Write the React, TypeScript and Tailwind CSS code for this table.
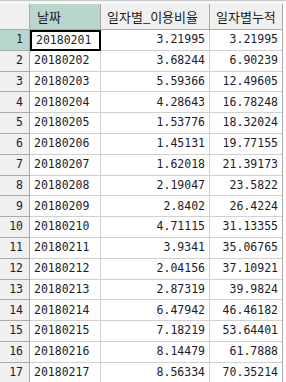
import React from "react";

type Row = {
	date: string;
	rate: string;
	total: string;
};

const rows: Row[] = [
	{ date: "20180201", rate: "3.21995", total: "3.21995" },
	{ date: "20180202", rate: "3.68244", total: "6.90239" },
	{ date: "20180203", rate: "5.59366", total: "12.49605" },
	{ date: "20180204", rate: "4.28643", total: "16.78248" },
	{ date: "20180205", rate: "1.53776", total: "18.32024" },
	{ date: "20180206", rate: "1.45131", total: "19.77155" },
	{ date: "20180207", rate: "1.62018", total: "21.39173" },
	{ date: "20180208", rate: "2.19047", total: "23.5822" },
	{ date: "20180209", rate: "2.8402", total: "26.4224" },
	{ date: "20180210", rate: "4.71115", total: "31.13355" },
	{ date: "20180211", rate: "3.9341", total: "35.06765" },
	{ date: "20180212", rate: "2.04156", total: "37.10921" },
	{ date: "20180213", rate: "2.87319", total: "39.9824" },
	{ date: "20180214", rate: "6.47942", total: "46.46182" },
	{ date: "20180215", rate: "7.18219", total: "53.64401" },
	{ date: "20180216", rate: "8.14479", total: "61.7888" },
	{ date: "20180217", rate: "8.56334", total: "70.35214" },
];

const mono = "font-['DejaVu_Sans_Mono','Liberation_Mono',monospace] text-[11.5px] text-[#1b1b2a]";
const kr = "font-['Noto_Sans_CJK_KR','Noto_Sans',sans-serif] text-[13px] text-[#1a1a1a]";

export default function App() {
	return (
		<div className="w-[286px] h-[382px] overflow-hidden bg-white">
			<div className="h-[4px] border-t border-[#c8c8c8] bg-[#f7f7f7]"></div>
			<div className="flex flex-col w-[283px] border-r border-[#a9a9a9]">
				<div className="flex h-[26px] border-b border-[#a9a9a9]">
					<div className="w-[30px] bg-[#f0f0f0] border-r border-[#a9a9a9]"></div>
					<div className={"w-[71px] bg-[#b9d6cd] border-r border-[#a9a9a9] flex items-center pl-[7px] " + kr}>날짜</div>
					<div className={"w-[109px] bg-[#f0f0f0] border-r border-[#a9a9a9] flex items-center pl-[6px] " + kr}>일자별_이용비율</div>
					<div className={"flex-1 bg-[#f0f0f0] flex items-center pl-[6px] " + kr}>일자별누적</div>
				</div>
				{rows.map((r, i) => (
					<div key={r.date} className="flex h-[20.8px] shrink-0">
						<div className={"w-[30px] flex items-center justify-end pr-[6px] border-r border-b border-[#a9a9a9] " + (i === 0 ? "bg-[#b9d6cd] " : "bg-[#f0f0f0] ") + mono}>
							{i + 1}
						</div>
						<div className={"w-[71px] flex items-center pl-[4px] " + (i === 0 ? "border-2 border-black " : "border-r border-b border-[#d0d0d0] ") + mono}>
							{r.date}
						</div>
						<div className={"w-[109px] flex items-center justify-end pr-[4px] border-r border-b border-[#d0d0d0] " + mono}>
							{r.rate}
						</div>
						<div className={"flex-1 flex items-center justify-end pr-[4px] border-b border-[#d0d0d0] " + mono}>
							{r.total}
						</div>
					</div>
				))}
			</div>
		</div>
	);
}
